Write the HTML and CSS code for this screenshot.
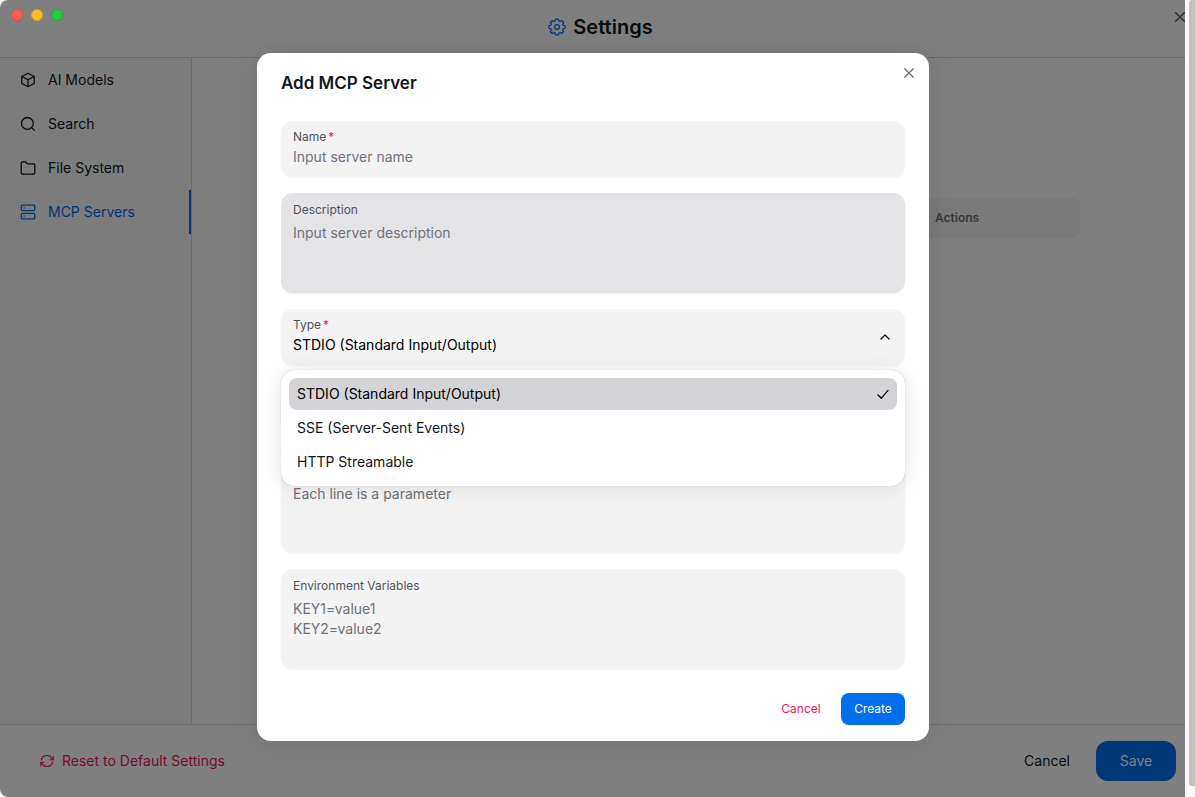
FILE: index.html
```html
<!DOCTYPE html>
<html lang="en">
<head>
  <meta charset="UTF-8">
  <meta name="viewport" content="width=device-width, initial-scale=1.0">
  <title>Settings</title>
  <link rel="stylesheet" href="styles.css">
</head>
<body>
  <div class="app">
    <header class="app-header">
      <svg class="title-icon" viewBox="0 0 20 20" fill="none" stroke="currentColor" stroke-width="1.4" stroke-linejoin="round">
        <path d="M8.4 1.2h3.2l.5 2.1 1.3.6 1.9-1.2 2.2 2.2-1.2 1.9.6 1.3 2.1.5v2.8l-2.1.5-.6 1.3 1.2 1.9-2.2 2.2-1.9-1.2-1.3.6-.5 2.1H8.4l-.5-2.1-1.3-.6-1.9 1.2-2.2-2.2 1.2-1.9-.6-1.3-2.1-.5V8.6l2.1-.5.6-1.3-1.2-1.9 2.2-2.2 1.9 1.2 1.3-.6z"/>
        <circle cx="10" cy="10" r="2.6"/>
      </svg>
      <h1>Settings</h1>
      <button class="close app-close" aria-label="Close settings">
        <svg viewBox="0 0 16 16" fill="none" stroke="currentColor" stroke-width="1.4" stroke-linecap="round"><path d="M3.7 3.7l8.6 8.6M12.3 3.7l-8.6 8.6"/></svg>
      </button>
    </header>

    <div class="app-main">
      <nav class="sidebar">
        <a href="#models">
          <svg viewBox="0 0 16 16" fill="none" stroke="currentColor" stroke-width="1.3" stroke-linejoin="round"><path d="M8 1.2l6.2 3.3v7L8 14.8l-6.2-3.3v-7zM1.8 4.5L8 7.8l6.2-3.3M8 7.8v7"/></svg>
          AI Models
        </a>
        <a href="#search">
          <svg viewBox="0 0 16 16" fill="none" stroke="currentColor" stroke-width="1.3" stroke-linecap="round"><circle cx="7.4" cy="7.4" r="5.9"/><path d="M11.8 11.8l2.6 2.6"/></svg>
          Search
        </a>
        <a href="#files">
          <svg viewBox="0 0 16 16" fill="none" stroke="currentColor" stroke-width="1.3" stroke-linejoin="round"><path d="M1.2 3c0-.7.5-1.2 1.2-1.2h3.1l1.9 2.1h6.2c.7 0 1.2.5 1.2 1.2v7.9c0 .7-.5 1.2-1.2 1.2H2.4c-.7 0-1.2-.5-1.2-1.2z"/></svg>
          File System
        </a>
        <a href="#mcp" class="active">
          <svg viewBox="0 0 16 16" fill="none" stroke="currentColor" stroke-width="1.3"><rect x="1.2" y="1.2" width="13.6" height="5.4" rx="1.4"/><rect x="1.2" y="9.4" width="13.6" height="5.4" rx="1.4"/><path d="M3.4 3.9h1.4M3.4 12.1h1.4"/></svg>
          MCP Servers
        </a>
      </nav>
      <main class="content">
        <table class="servers">
          <thead>
            <tr><td></td><th scope="col">Actions</th></tr>
          </thead>
        </table>
      </main>
    </div>

    <footer class="app-footer">
      <button class="btn btn-reset">
        <svg viewBox="0 0 16 16" fill="none" stroke="currentColor" stroke-width="1.3" stroke-linecap="round" stroke-linejoin="round"><path d="M1.5 7A6.6 6.6 0 0 1 13.7 5l1 1.5M15.2 2.6v4h-4M14.5 9A6.6 6.6 0 0 1 2.3 11l-1-1.5M.8 13.4v-4h4"/></svg>
        Reset to Default Settings
      </button>
      <button class="btn btn-cancel">Cancel</button>
      <button class="btn btn-save">Save</button>
    </footer>

    <div class="overlay">
      <form class="modal" role="dialog" aria-labelledby="modalTitle">
        <h2 id="modalTitle">Add MCP Server</h2>
        <button type="button" class="close modal-close" aria-label="Close">
          <svg viewBox="0 0 16 16" fill="none" stroke="currentColor" stroke-width="1.4" stroke-linecap="round"><path d="M3.7 3.7l8.6 8.6M12.3 3.7l-8.6 8.6"/></svg>
        </button>

        <div class="fields">
          <div class="field">
            <label for="name">Name<span class="required">*</span></label>
            <input id="name" type="text" placeholder="Input server name">
          </div>
          <div class="field field-area hovered">
            <label for="description">Description</label>
            <textarea id="description" rows="3" placeholder="Input server description"></textarea>
          </div>
          <div class="field field-select">
            <label for="type">Type<span class="required">*</span></label>
            <select id="type">
              <option>STDIO (Standard Input/Output)</option>
              <option>SSE (Server-Sent Events)</option>
              <option>HTTP Streamable</option>
            </select>
            <svg class="chevron" viewBox="0 0 16 16" fill="none" stroke="currentColor" stroke-width="1.4" stroke-linecap="round" stroke-linejoin="round"><path d="M4 10l4-4 4 4"/></svg>
            <ul class="listbox" role="listbox" aria-label="Type">
              <li role="option" aria-selected="true" class="selected">
                STDIO (Standard Input/Output)
                <svg viewBox="0 0 16 16" fill="none" stroke="currentColor" stroke-width="1.3" stroke-linecap="round" stroke-linejoin="round"><path d="M3 9l3.4 3.2L13 4.4"/></svg>
              </li>
              <li role="option">SSE (Server-Sent Events)</li>
              <li role="option">HTTP Streamable</li>
            </ul>
          </div>
          <div class="field">
            <input type="text" aria-label="Command">
          </div>
          <div class="field field-area field-bottom">
            <textarea rows="3" aria-label="Arguments" placeholder="Each line is a parameter"></textarea>
          </div>
          <div class="field field-area">
            <label for="env">Environment Variables</label>
            <textarea id="env" rows="3" placeholder="KEY1=value1&#10;KEY2=value2"></textarea>
          </div>
        </div>

        <div class="modal-footer">
          <button type="button" class="btn-small btn-danger">Cancel</button>
          <button type="submit" class="btn-small btn-primary">Create</button>
        </div>
      </form>
    </div>

    <div class="window-controls">
      <span class="dot red"></span>
      <span class="dot yellow"></span>
      <span class="dot green"></span>
    </div>
  </div>
  <div class="scrollbar"><div class="thumb"></div></div>
</body>
</html>
```

FILE: styles.css
```css
* {
  box-sizing: border-box;
}

body {
  margin: 0;
  display: flex;
  height: 100vh;
  overflow: hidden;
  font-family: Inter, "Liberation Sans", sans-serif;
  font-size: 14px;
  line-height: 20px;
  color: #11181c;
  background-color: #fafafa;
}

h1, h2, ul {
  margin: 0;
  padding: 0;
}

button, input, textarea, select {
  font: inherit;
  color: inherit;
  border: none;
  background: none;
  padding: 0;
}

button {
  cursor: pointer;
}

svg {
  display: block;
  width: 16px;
  height: 16px;
  flex: none;
}

.app {
  position: relative;
  flex: 1;
  display: flex;
  flex-direction: column;
  background-color: #fff;
  border-radius: 8px 0 0 8px;
  overflow: hidden;
}

/* Title bar */
.app-header {
  position: relative;
  display: flex;
  justify-content: center;
  align-items: center;
  gap: 7px;
  padding: 13px 0 16px 16px;
  border-bottom: 1px solid #d4d4d8;
}

h1 {
  font-size: 20px;
  line-height: 28px;
  font-weight: 600;
}

.title-icon {
  width: 18px;
  height: 18px;
  color: #006fee;
}

.close {
  position: absolute;
  color: #71717a;
}

.app-close {
  top: 9px;
  right: -3px;
  color: #52525b;
}

.window-controls {
  position: absolute;
  top: 9px;
  left: 11px;
  display: flex;
  gap: 8px;
}

.dot {
  width: 12px;
  height: 12px;
  border-radius: 50%;
}

.red {
  background-color: #ff5f57;
  border: 1px solid #e2463f;
}

.yellow {
  background-color: #febc2e;
  border: 1px solid #e0a11f;
}

.green {
  background-color: #28c840;
  border: 1px solid #1aab29;
}

/* Sidebar and content */
.app-main {
  flex: 1;
  display: flex;
}

.sidebar {
  width: 192px;
  background-color: #f8f8f8;
  border-right: 1px solid #d4d4d8;
}

.sidebar a {
  display: flex;
  align-items: center;
  gap: 12px;
  height: 44px;
  padding: 0 20px;
  color: #11181c;
  text-decoration: none;
}

.sidebar a.active {
  color: #006fee;
  border-right: 2px solid #006fee;
}

.content {
  flex: 1;
  padding: 140px 105px 0;
}

.servers {
  width: 100%;
  border-collapse: separate;
  border-spacing: 0;
}

.servers td, .servers th {
  height: 40px;
  padding: 0 12px;
  background-color: #f4f4f5;
}

.servers td {
  border-radius: 8px 0 0 8px;
}

.servers th {
  width: 157px;
  border-radius: 0 8px 8px 0;
  font-size: 12px;
  font-weight: 600;
  text-align: left;
  color: #71717a;
}

/* Bottom bar */
.app-footer {
  display: flex;
  align-items: center;
  padding: 16px 9px 16px 24px;
  border-top: 1px solid #d4d4d8;
}

.btn {
  height: 40px;
  padding: 0 16px;
  border-radius: 12px;
}

.btn-reset {
  display: flex;
  align-items: center;
  gap: 8px;
  margin-right: auto;
  color: #f31260;
}

.btn-reset svg {
  width: 14px;
  height: 14px;
}

.btn-cancel {
  margin-right: 10px;
}

.btn-save {
  width: 80px;
  color: #fff;
  background-color: #006fee;
}

/* Dialog */
.overlay {
  position: absolute;
  inset: 0;
  display: flex;
  justify-content: center;
  align-items: center;
  padding: 0 0 3px 1px;
  background-color: rgba(0, 0, 0, 0.5);
}

.modal {
  position: relative;
  width: 100%;
  max-width: 672px;
  padding: 16px 24px;
  background-color: #fff;
  border-radius: 14px;
  box-shadow: 0 0 15px rgba(0, 0, 0, 0.03), 0 2px 30px rgba(0, 0, 0, 0.08);
}

h2 {
  font-size: 17px;
  line-height: 28px;
  font-weight: 600;
}

.modal-close {
  top: 12px;
  right: 12px;
}

.fields {
  display: flex;
  flex-direction: column;
  gap: 16px;
  margin: 24px 0;
}

.field {
  position: relative;
  display: flex;
  flex-direction: column;
  gap: 2px;
  height: 56px;
  padding: 8px 12px;
  background-color: #f4f4f5;
  border-radius: 12px;
  box-shadow: 0 1px 2px rgba(0, 0, 0, 0.05);
}

.field-area {
  gap: 5px;
  height: 100px;
  padding: 9px 12px;
}

.field-bottom {
  justify-content: flex-end;
}

.hovered {
  background-color: #e4e4e7;
}

.field label {
  font-size: 12px;
  line-height: 16px;
  color: #52525b;
}

.required {
  margin-left: 2px;
  color: #f31260;
}

.field input, .field textarea, .field select {
  width: 100%;
  outline: none;
  resize: none;
  appearance: none;
}

.field ::placeholder {
  color: #71717a;
  opacity: 1;
}

.field select {
  color: #000;
}

.chevron {
  position: absolute;
  top: 20px;
  right: 12px;
}

.listbox {
  position: absolute;
  top: calc(100% + 5px);
  left: 0;
  right: 0;
  z-index: 1;
  display: flex;
  flex-direction: column;
  gap: 2px;
  padding: 8px;
  list-style: none;
  background-color: #fff;
  border-radius: 14px;
  box-shadow: 0 0 15px rgba(0, 0, 0, 0.03), 0 2px 30px rgba(0, 0, 0, 0.08), 0 0 1px rgba(0, 0, 0, 0.3);
}

.listbox li {
  display: flex;
  justify-content: space-between;
  align-items: center;
  height: 32px;
  padding: 0 6px 0 8px;
  border-radius: 8px;
}

.listbox .selected {
  color: #000;
  background-color: #d4d4d8;
}

.modal-footer {
  display: flex;
  justify-content: flex-end;
  gap: 8px;
}

.btn-small {
  min-width: 64px;
  height: 32px;
  padding: 0 12px;
  border-radius: 8px;
  font-size: 12px;
}

.btn-danger {
  color: #f31260;
}

.btn-primary {
  color: #fff;
  background-color: #006fee;
}

/* Page scrollbar */
.scrollbar {
  width: 10px;
  padding: 0 0 11px 4px;
  background-color: #fafafa;
}

.thumb {
  height: 100%;
  background-color: #c1c1c1;
  border-radius: 3px 0 0 3px;
}
```
